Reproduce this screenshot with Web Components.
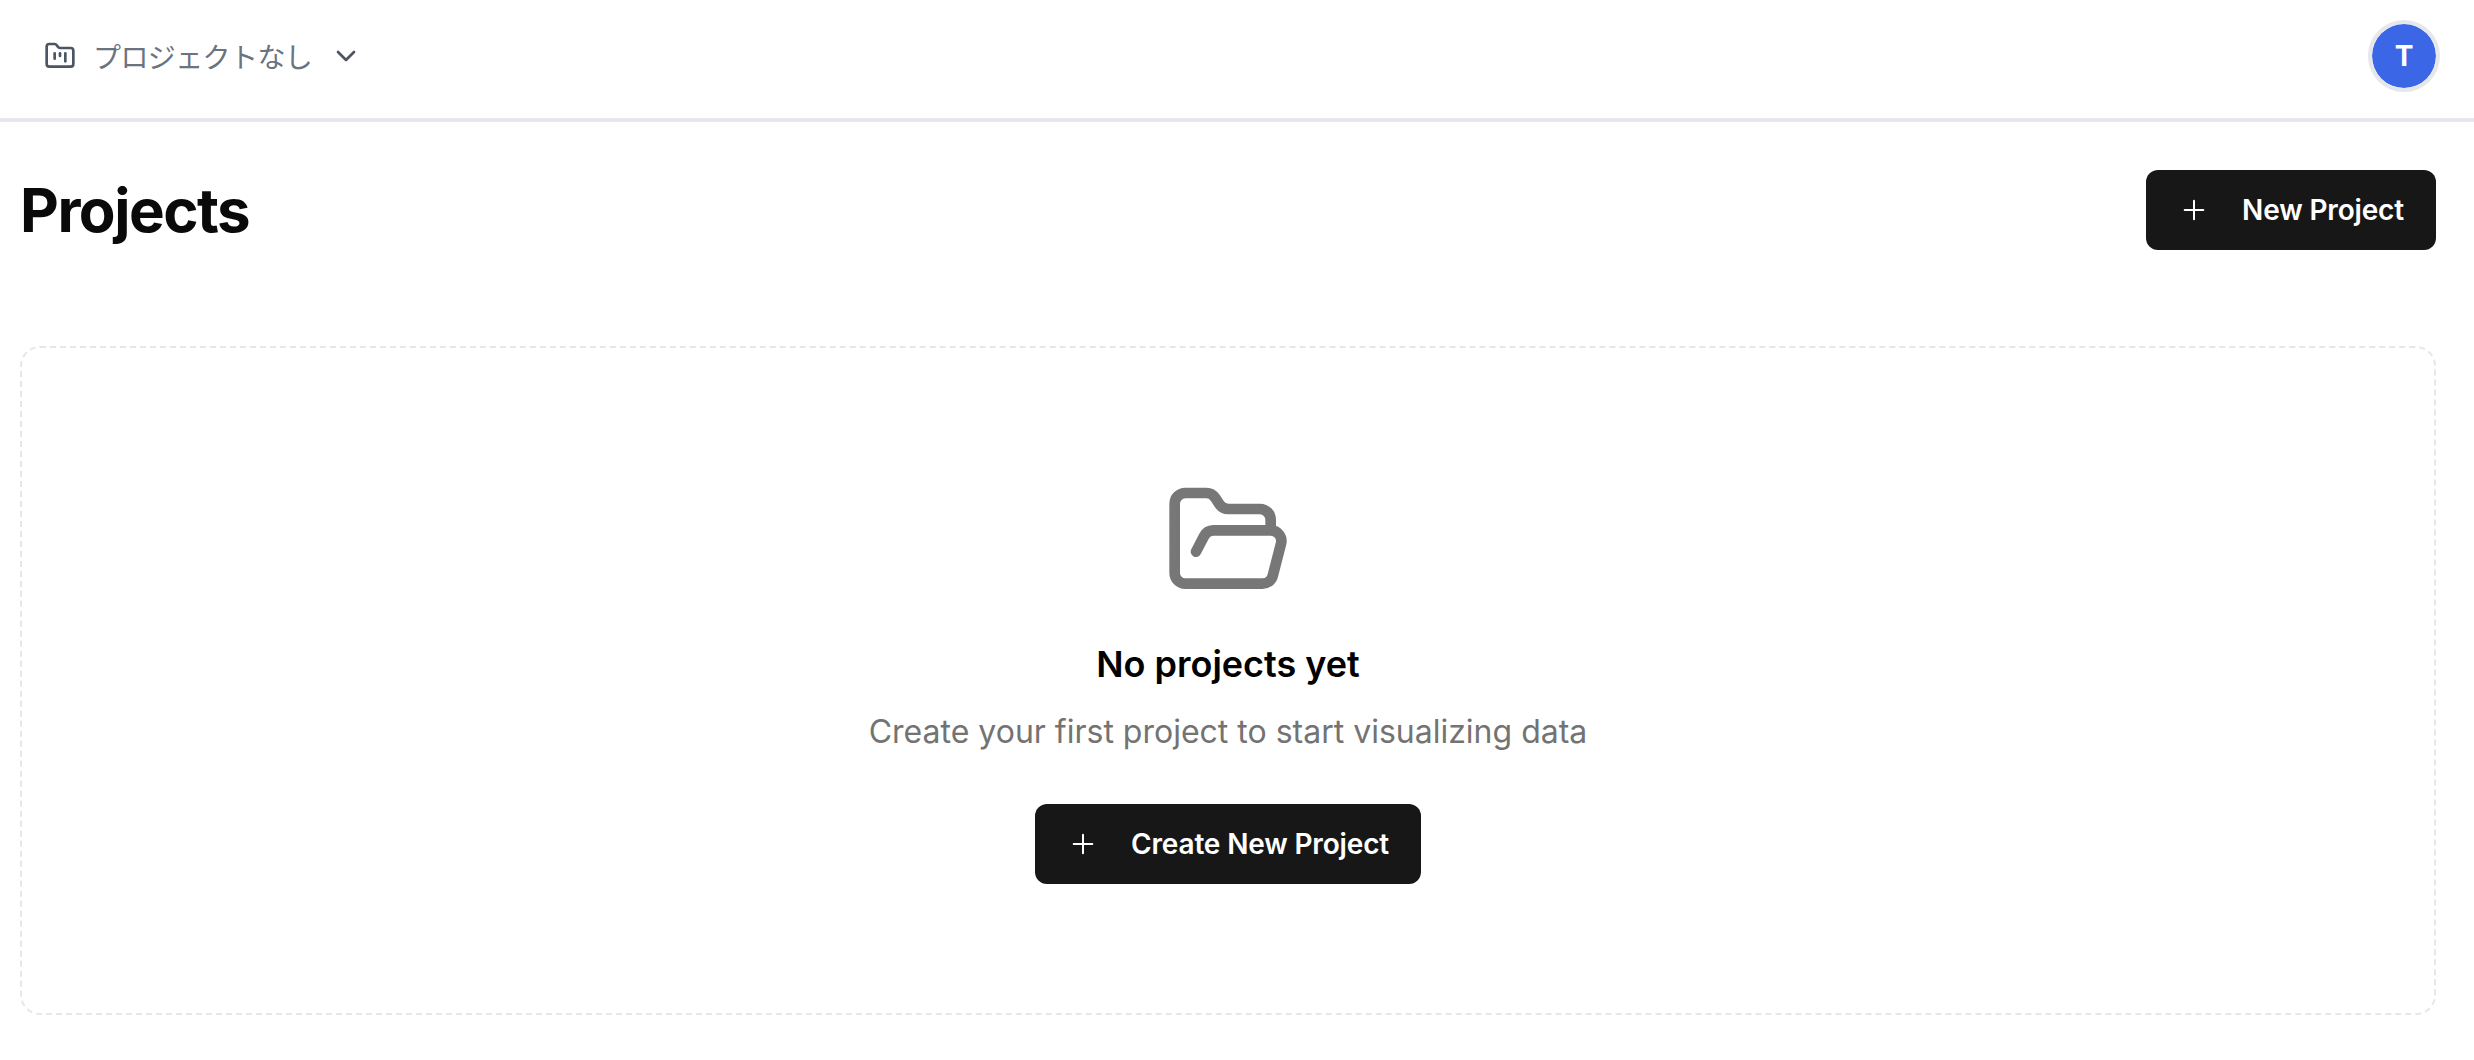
<!DOCTYPE html>
<html lang="ja"><head><meta charset="utf-8">
<style>
html,body{margin:0;padding:0;background:#fff;}
body{font-family:Inter,"Noto Sans CJK JP",sans-serif;height:1060px;overflow:hidden;}
</style></head><body>
<app-shell>
  <top-bar slot="top"></top-bar>
  <page-head title-text="Projects"></page-head>
  <empty-state></empty-state>
</app-shell>
<script>
const PLUS='<svg width="32" height="32" viewBox="0 0 24 24" fill="none" stroke="currentColor" stroke-width="1.5" stroke-linecap="round" stroke-linejoin="round"><path d="M5 12h14"/><path d="M12 5v14"/></svg>';
function def(name,html,init){customElements.define(name,class extends HTMLElement{
  connectedCallback(){if(this.shadowRoot)return;const r=this.attachShadow({mode:'open'});r.innerHTML=html;if(init)init.call(this,r);}
});}
def('app-shell',`<style>:host{display:block}main{display:flex;flex-direction:column;padding:0 38px 0 20px}</style><slot name="top"></slot><main><slot></slot></main>`);
def('dark-button',`<style>:host{display:inline-flex}
button{all:unset;box-sizing:border-box;height:80px;display:inline-flex;align-items:center;gap:32px;padding:0 32px;background:#171717;color:#fff;border-radius:12px;font:600 28px/1 Inter,sans-serif;letter-spacing:-.16px;white-space:nowrap}
svg{display:block;flex:none}</style><button>${PLUS}<span><slot></slot></span></button>`);
def('top-bar',`<style>:host{display:flex;box-sizing:border-box;height:122px;border-bottom:4px solid #e5e7eb;align-items:center;justify-content:space-between;padding:0 34px 6px 44px;background:#fff}
.sel{display:flex;align-items:center;color:#6b7280;font:400 28px/1 "Noto Sans CJK JP","Inter",sans-serif}
.sel span{letter-spacing:-.6px}
.ic{display:block;color:#4b5563;margin-right:17px}.ch{display:block;margin-left:18px;color:#4b5563}
.av{width:72px;height:72px;box-sizing:border-box;border:4px solid #e5e7eb;border-radius:50%;background:#3b66e6;background-clip:padding-box;color:#fff;display:flex;align-items:center;justify-content:center;font:700 28px/1 Inter,sans-serif}</style>
<div class="sel"><svg class="ic" width="32" height="32" viewBox="0 0 24 24" fill="none" stroke="currentColor" stroke-width="2" stroke-linecap="round" stroke-linejoin="round"><path d="M4 20h16a2 2 0 0 0 2-2V8a2 2 0 0 0-2-2h-7.93a2 2 0 0 1-1.66-.9l-.82-1.2A2 2 0 0 0 7.93 3H4a2 2 0 0 0-2 2v13c0 1.1.9 2 2 2Z"/><path d="M8 10v4"/><path d="M12 10v2"/><path d="M16 10v6"/></svg><span>プロジェクトなし</span><svg class="ch" width="32" height="32" viewBox="0 0 24 24" fill="none" stroke="currentColor" stroke-width="2" stroke-linecap="round" stroke-linejoin="round"><path d="m6 9 6 6 6-6"/></svg></div>
<div class="av">T</div>`);
def('page-head',`<style>:host{display:flex;align-items:center;justify-content:space-between;padding-top:48px;margin-bottom:96px}
h1{margin:0;font:700 60px/80px Inter,sans-serif;letter-spacing:-1.5px;color:#0a0a0a}</style><h1>Projects</h1><dark-button>New Project</dark-button>`);
def('empty-state',`<style>:host{display:flex;box-sizing:border-box;height:669px;flex-direction:column;align-items:center;border:2px dashed #e5e7eb;border-radius:20px;padding-top:129px}
svg{display:block;color:#777}
h2{margin:31px 0 0;font:600 36px/56px Inter,sans-serif;color:#000}
p{margin:12px 0 0;font:400 32px/56px Inter,sans-serif;color:#737373}
dark-button{margin-top:44px}</style>
<svg width="128" height="128" viewBox="0 0 24 24" fill="none" stroke="currentColor" stroke-width="2" stroke-linecap="round" stroke-linejoin="round"><path d="m6 14 1.5-2.9A2 2 0 0 1 9.24 10H20a2 2 0 0 1 1.94 2.5l-1.54 6a2 2 0 0 1-1.95 1.5H4a2 2 0 0 1-2-2V5a2 2 0 0 1 2-2h3.9a2 2 0 0 1 1.69.9l.81 1.2a2 2 0 0 0 1.67.9H18a2 2 0 0 1 2 2v2"/></svg>
<h2>No projects yet</h2><p>Create your first project to start visualizing data</p><dark-button>Create New Project</dark-button>`);
</script>
</body></html>
